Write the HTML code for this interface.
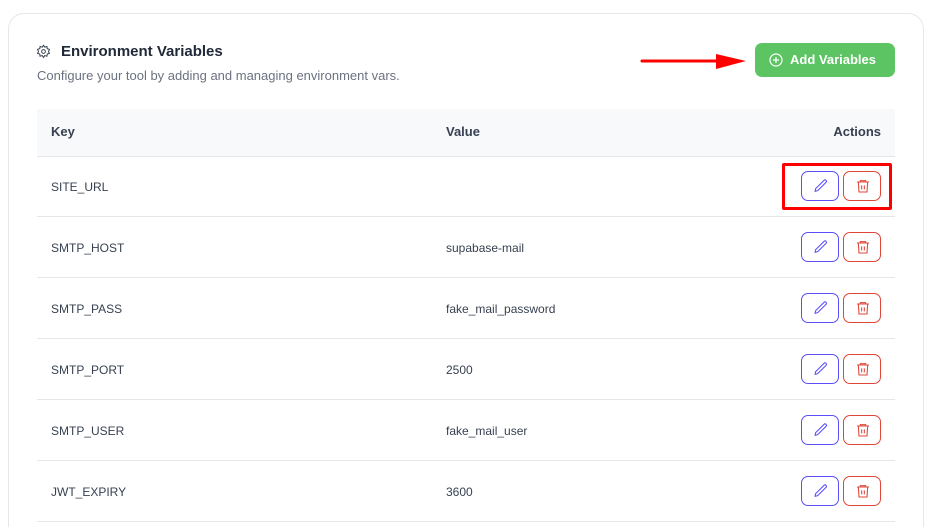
<!DOCTYPE html>
<html><head><style>
*{box-sizing:border-box;margin:0;padding:0}
html,body{width:934px;height:527px;overflow:hidden}
body{background:#fff;font-family:"Liberation Sans",sans-serif;position:relative}
.card{position:absolute;left:8px;top:13px;width:916px;height:540px;border:1px solid #e5e7eb;border-radius:16px}
.title{position:absolute;left:61px;top:43px;font-size:15px;font-weight:bold;color:#1f2937}
.sub{position:absolute;left:37px;top:68px;font-size:13px;color:#6b7280}
.add{position:absolute;left:755px;top:43px;width:140px;height:34px;background:#5cc462;border-radius:7px;color:#fff;font-size:13px;font-weight:bold;line-height:34px;padding-left:35px}
.thead{position:absolute;left:37px;top:109px;width:858px;height:48px;background:#f8f9fb;border-bottom:1px solid #e5e7eb;font-size:13px;font-weight:bold;color:#374151}
.row{position:absolute;left:37px;width:858px;height:61px;border-bottom:1px solid #e5e7eb;font-size:12px;color:#374151}
.k{position:absolute;left:14px}
.v{position:absolute;left:409px}
.b{position:absolute;top:14px;width:38px;height:30px;border:1px solid;border-radius:7px}
.e{left:764px;border-color:#5b4ff5}
.d{left:806px;border-color:#e0453a}
.b svg{position:absolute;left:11px;top:6px}
</style></head><body>
<div class="card"></div>
<svg style="position:absolute;left:36px;top:44px" width="15" height="15" viewBox="0 0 24 24" fill="none" stroke="#374151" stroke-width="1.6"><circle cx="12" cy="12" r="3"/><path d="M12 2l2 3 3.5-1 .5 3.5 3.5 1-1.5 3.5 1.5 3-3.5 1-.5 3.5-3.5-1-2 3-2-3-3.5 1-.5-3.5-3.5-1 1.5-3-1.5-3.5 3.5-1 .5-3.5 3.5 1z"/></svg>
<div class="title">Environment Variables</div>
<div class="sub">Configure your tool by adding and managing environment vars.</div>
<svg style="position:absolute;left:640px;top:51px" width="110" height="22"><line x1="2" y1="10" x2="80" y2="10" stroke="#f00" stroke-width="3" stroke-linecap="round"/><polygon points="76,3 106,10 76,18" fill="#f00"/></svg>
<div class="add">Add Variables</div>
<svg style="position:absolute;left:769px;top:53px" width="14" height="14" viewBox="0 0 14 14" fill="none" stroke="#fff" stroke-width="1.2"><circle cx="7" cy="7" r="6"/><path d="M7 4v6M4 7h6"/></svg>
<div class="thead"><span style="position:absolute;left:14px;top:15px">Key</span><span style="position:absolute;left:409px;top:15px">Value</span><span style="position:absolute;right:14px;top:15px">Actions</span></div>
<div style="position:absolute;left:782px;top:163px;width:110px;height:47px;border:3px solid #f00;border-radius:2px;z-index:2"></div>
<div id="rows"></div>
<script>
var d=[["SITE_URL",""],["SMTP_HOST","supabase-mail"],["SMTP_PASS","fake_mail_password"],["SMTP_PORT","2500"],["SMTP_USER","fake_mail_user"],["JWT_EXPIRY","3600"]];
var h="";d.forEach(function(r,i){var t=156+i*61;h+='<div class="row" style="top:'+t+'px"><span class="k" style="top:24px">'+r[0]+'</span><span class="v" style="top:24px">'+r[1]+'</span>'+
'<div class="b e" style="top:15px"><svg width="16" height="16" viewBox="0 0 24 24" fill="none" stroke="#5b4ff5" stroke-width="1.6" stroke-linejoin="round"><path d="M16.5 3.5a2.1 2.1 0 013 3L7 19l-4 1 1-4z"/></svg></div>'+
'<div class="b d" style="top:15px"><svg width="16" height="16" viewBox="0 0 24 24" fill="none" stroke="#e0453a" stroke-width="1.6"><path d="M3 6h18M8 6V4h8v2M5 6l1 15h12l1-15M10 11v6M14 11v6"/></svg></div></div>';});
document.getElementById("rows").innerHTML=h;
</script>
</body></html>
